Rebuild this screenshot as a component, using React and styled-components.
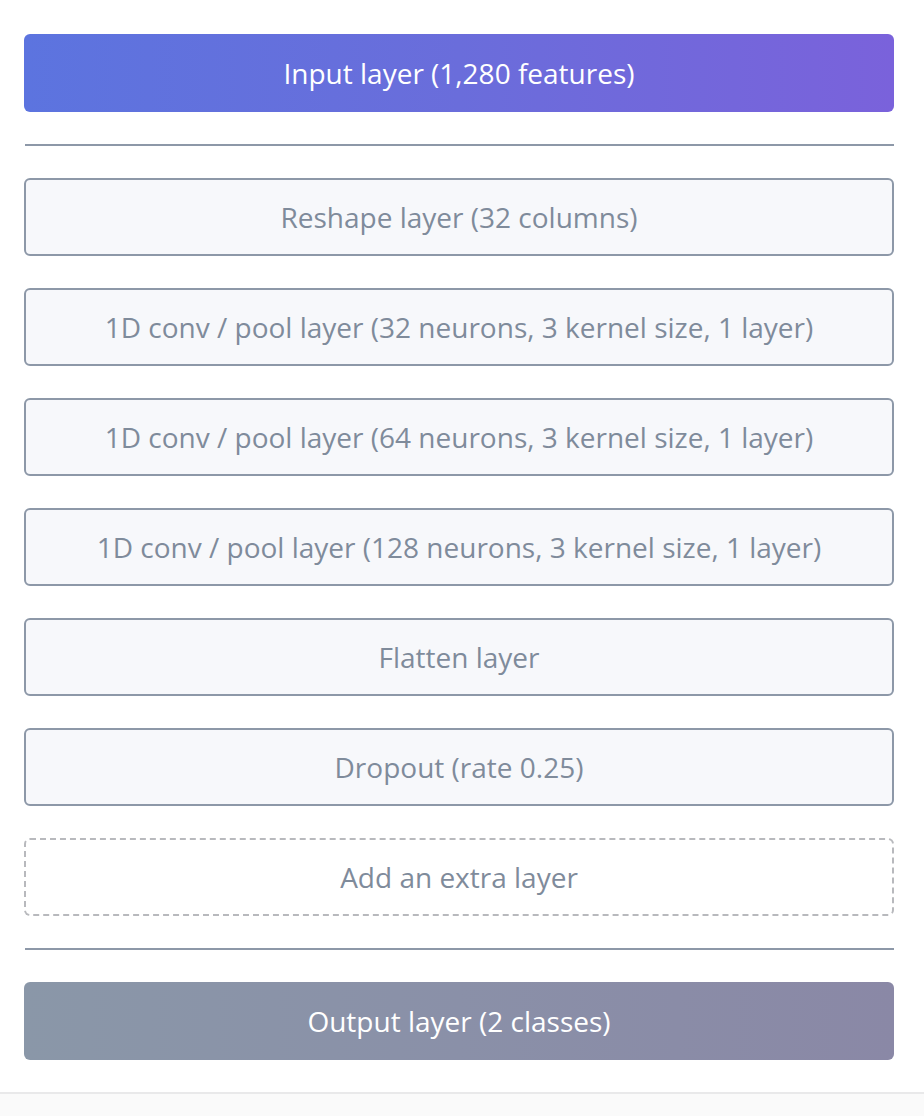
import React from "react";
import styled, { createGlobalStyle } from "styled-components";

const Global = createGlobalStyle`
  html, body { margin: 0; padding: 0; background: #ffffff; }
  body { font-family: "Open Sans", "Noto Sans", sans-serif; }
`;

const Page = styled.div`
  min-height: 1116px;
  display: flex;
  flex-direction: column;
`;

const Stack = styled.div`
  display: flex;
  flex-direction: column;
  gap: 32px;
  padding: 34px 30px 32px 24px;
`;

const Block = styled.div`
  height: 78px;
  box-sizing: border-box;
  border-radius: 6px;
  display: flex;
  align-items: center;
  justify-content: center;
  font-size: 28px;
  letter-spacing: 0;
`;

const Primary = styled(Block)`
  background: linear-gradient(90deg, #5c74df 0%, #6a6ddb 50%, #7a62db 100%);
  color: #ffffff;
`;

const Output = styled(Block)`
  background: linear-gradient(90deg, #8a97a8 0%, #8a90a8 50%, #8a88a6 100%);
  color: #ffffff;
`;

const Layer = styled(Block)`
  border: 2px ${(p) => (p.$dashed ? "dashed #b8b9bd" : "solid #8d98a8")};
  background: ${(p) => (p.$dashed ? "#ffffff" : "#f7f8fb")};
  color: #7f8b9b;
`;

const Rule = styled.div`
  height: 2px;
  margin-left: 1px;
  background: #8d98a8;
`;

const Footer = styled.div`
  flex: 1;
  border-top: 2px solid #e9e9ea;
  background: #fafafa;
`;

const layers = [
  "Reshape layer (32 columns)",
  "1D conv / pool layer (32 neurons, 3 kernel size, 1 layer)",
  "1D conv / pool layer (64 neurons, 3 kernel size, 1 layer)",
  "1D conv / pool layer (128 neurons, 3 kernel size, 1 layer)",
  "Flatten layer",
  "Dropout (rate 0.25)",
];

export default function App() {
  return (
    <Page>
      <Global />
      <Stack>
        <Primary>Input layer (1,280 features)</Primary>
        <Rule />
        {layers.map((l) => (
          <Layer key={l}>{l}</Layer>
        ))}
        <Layer $dashed>Add an extra layer</Layer>
        <Rule />
        <Output>Output layer (2 classes)</Output>
      </Stack>
      <Footer />
    </Page>
  );
}
